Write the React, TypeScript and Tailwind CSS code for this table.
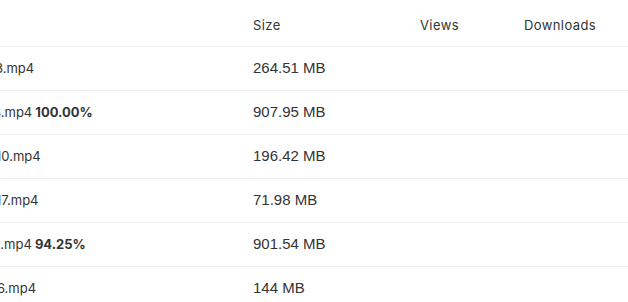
const rows = [
  { name: '3.mp4', shift: '-ml-[5px]', pct: '', size: '264.51 MB' },
  { name: '8.mp4', shift: '-ml-[7px]', pct: '100.00%', size: '907.95 MB' },
  { name: '10.mp4', shift: '-ml-[4px]', pct: '', size: '196.42 MB' },
  { name: '17.mp4', shift: '-ml-[4px]', pct: '', size: '71.98 MB' },
  { name: '1.mp4', shift: '-ml-[5px]', pct: '94.25%', size: '901.54 MB' },
  { name: '6.mp4', shift: '-ml-[3px]', pct: '', size: '144 MB' },
]

export default function App() {
  return (
    <div className="w-[628px] h-[302px] overflow-hidden bg-white text-[#333333] font-['Inter',sans-serif]">
      {/* header */}
      <div className="grid grid-cols-[253px_167px_104px_1fr] h-[47px] items-center border-b border-[#eeeeee] text-[13px] tracking-[0.4px] pt-[5px]">
        <div className="overflow-hidden whitespace-nowrap"></div>
        <div>Size</div>
        <div>Views</div>
        <div>Downloads</div>
      </div>

      {rows.map((row, i) => (
        <div
          key={i}
          className="grid grid-cols-[253px_167px_104px_1fr] h-[44px] items-center border-b border-[#eeeeee]"
        >
          <div className="overflow-hidden whitespace-nowrap text-[13px]">
            <span className={`inline-block ${row.shift}`}>
              {row.name}
              {row.pct && <b className="font-bold"> {row.pct}</b>}
            </span>
          </div>
          <div className="text-[15px] font-['Liberation_Sans',Arial,sans-serif] text-[#333333]">
            {row.size}
          </div>
          <div></div>
          <div></div>
        </div>
      ))}
    </div>
  )
}
